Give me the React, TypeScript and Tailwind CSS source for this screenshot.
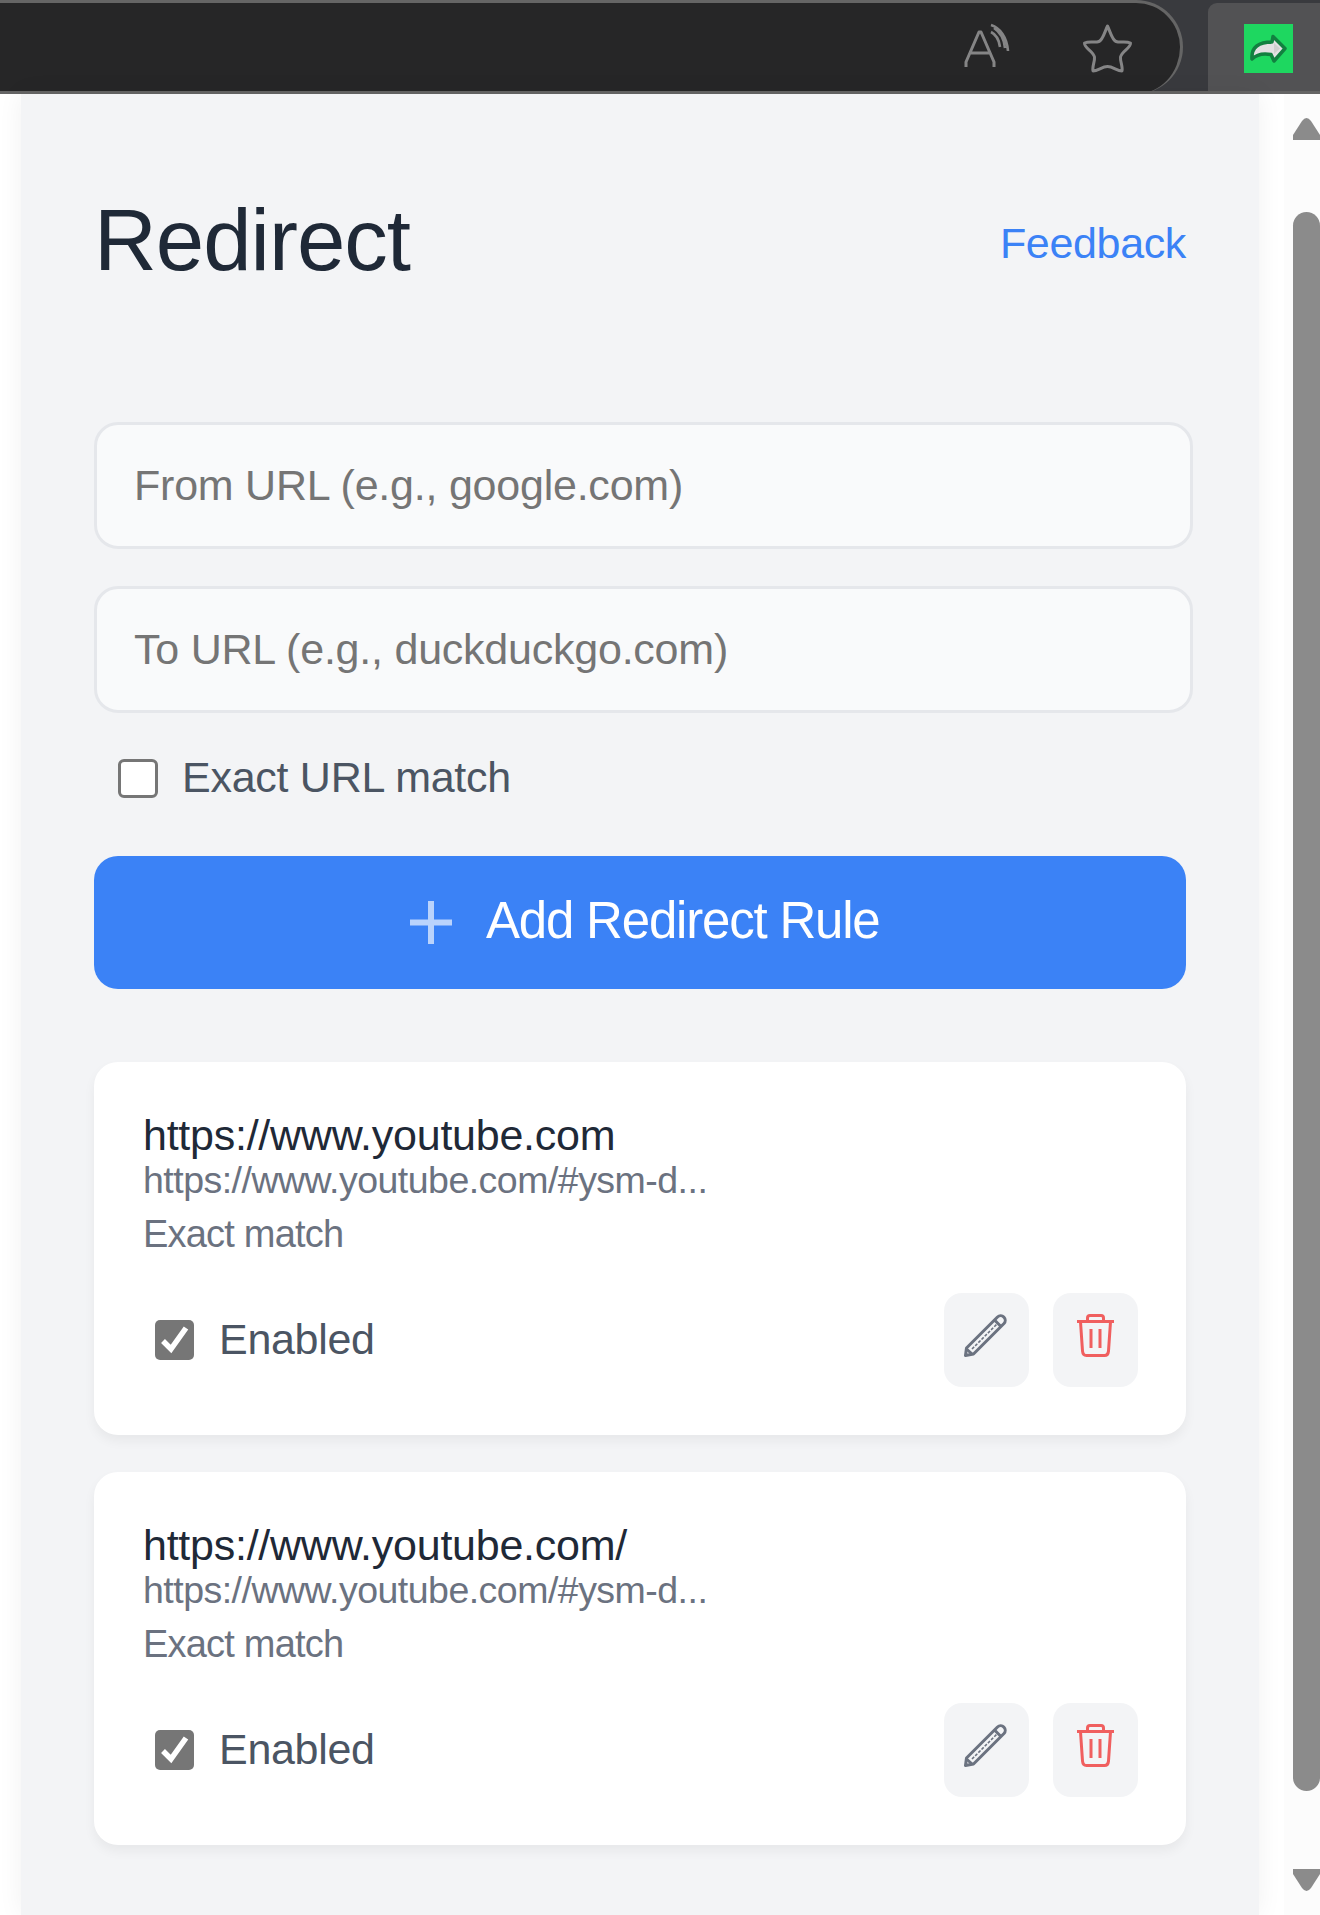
import React from "react";

const rules = [
  { from: "https://www.youtube.com", to: "https://www.youtube.com/#ysm-d..." },
  { from: "https://www.youtube.com/", to: "https://www.youtube.com/#ysm-d..." },
];

function ReadAloudIcon() {
  return (
    <svg className="h-[48px] w-[48px]" viewBox="0 0 48 48" fill="none" stroke="#858586" strokeWidth="3" strokeLinejoin="round">
      <path d="M2 47V42L15 12h2l13 30v5M7 33h18" />
      <path d="M27 12c4 2 8 7 9 15M27 5c9 3 16 12 17 26M30 8c6 4 10 10 11 20" strokeWidth="2.600" />
    </svg>
  );
}

function StarIcon() {
  return (
    <svg className="h-[51px] w-[51px]" viewBox="0 0 51 51" fill="none" stroke="#858586" strokeWidth="3" strokeLinejoin="round">
      <path d="M25.500 3C28 8 30 17 34 18.500C38 20 44 18 48.500 20C49 25 40 28 38.500 34C38 38 41 44 40 48C35 48 31 43.500 25.500 43.500C20 43.500 16 48 11 48C10 44 13 38 12.500 34C11 28 2 25 2.500 20C7 18 13 20 17 18.500C21 17 23 8 25.500 3Z" />
    </svg>
  );
}

function RedirectLogo() {
  return (
    <svg className="h-[49px] w-[49px] bg-[#1ed760]" viewBox="0 0 49 49">
      <path d="M8 35C7 23 15 18 28 18L29 12.500L41 24.500L30 37L27 30.500C19 29 13 30 8 35Z" fill="#e3e0e3" stroke="#128040" strokeWidth="3.500" strokeLinejoin="round" />
      <path d="M30 19 36 24.500 30 30Z" fill="#cfcfcf" />
    </svg>
  );
}

function PencilIcon() {
  return (
    <svg className="h-[45px] w-[45px]" viewBox="0 0 45 45" fill="none" stroke="#6b7280" strokeWidth="3" strokeLinejoin="round">
      <path d="M2.500 42.500 3.500 35 34.500 4a4.600 4.600 0 0 1 6.500 6.500L10.500 41Z" />
      <path d="M31 6.500l7 7M3.500 36l5.500 5" />
      <path d="M9 36 34 11" strokeWidth="1.600" strokeDasharray="3 1.500" />
    </svg>
  );
}

function TrashIcon() {
  return (
    <svg className="h-[45px] w-[39px]" viewBox="0 0 39 45" fill="none" stroke="#ef4444" strokeOpacity=".85" strokeWidth="3" strokeLinejoin="round">
      <path d="M1 8.500h37M11.500 8V5q0-2.500 2.500-2.500h11q2.500 0 2.500 2.500v3M4.500 9 6.500 38q.4 4.500 4 4.500h18q3.600 0 4-4.500L34.500 9" />
      <path d="M15 16v19M24 16v19" />
    </svg>
  );
}

function CheckedBox() {
  return (
    <span className="flex h-[40px] w-[39px] items-center justify-center rounded-[5px] bg-[#767676]">
      <svg className="h-[40px] w-[39px]" viewBox="0 0 39 40" fill="none" stroke="#fff" strokeWidth="5.500">
        <path d="m8 21 8 8L31 8" />
      </svg>
    </span>
  );
}

function RuleCard({ from, to }: { from: string; to: string }) {
  return (
    <article className="flex h-[373px] flex-col rounded-3xl bg-white pl-[49px] pr-12 pt-[48px] shadow-[0_6px_12px_rgba(0,0,0,0.05)]">
      <div className="h-[49px] whitespace-nowrap text-[43px] leading-[50px] tracking-[-0.25px] text-[#1f2937]">{from}</div>
      <div className="h-[42px] whitespace-nowrap text-[37.5px] leading-[42px] tracking-[-0.52px] text-[#6b7280]">{to}</div>
      <div className="mt-3 h-[42px] text-[38px] leading-[42px] tracking-[-0.8px] text-[#6b7280]">Exact match</div>
      <div className="mt-[38px] flex h-[94px] items-center">
        <div className="ml-3 flex items-center gap-[25px]">
          <CheckedBox />
          <span className="-mt-[3px] text-[43px] leading-[50px] tracking-[-0.3px] text-[#4b5563]">Enabled</span>
        </div>
        <div className="ml-auto flex gap-6">
          <button className="flex h-[94px] w-[85px] items-start justify-center rounded-[18px] bg-[#f3f4f6] pr-[2px] pt-[20px]"><PencilIcon /></button>
          <button className="flex h-[94px] w-[85px] items-start justify-center rounded-[18px] bg-[#f3f4f6] pt-[20px]"><TrashIcon /></button>
        </div>
      </div>
    </article>
  );
}

export default function App() {
  return (
    <div className="flex h-[1915px] w-[1320px] flex-col overflow-hidden bg-white font-['Liberation_Sans',Arial,sans-serif]">
      <header className="flex h-[94px] shrink-0 border-b-[3px] border-[#656565] bg-[#393a3e]">
        <div className="h-[91px] w-[1183px] overflow-hidden">
          <div className="flex h-[94px] w-[1183px] items-start rounded-r-[47px] border-r-[3px] border-t-[3px] border-[#656565] bg-[#262627]">
            <span className="ml-[964px] mt-[17px]"><ReadAloudIcon /></span>
            <span className="ml-[70px] mt-[20px]"><StarIcon /></span>
          </div>
        </div>
        <div className="ml-[25px] mt-[3px] flex flex-1 rounded-tl-[9px] bg-[#525254] pl-9 pt-[21px]"><RedirectLogo /></div>
      </header>
      <div className="flex min-h-0 flex-1">
        <main className="ml-[21px] w-[1238px] bg-[#f3f4f6] px-[73px] shadow-[0_0_24px_rgba(0,0,0,0.06)]">
          <div className="flex h-[328px] items-start justify-between">
            <h1 className="mt-[96px] text-[87px] leading-[100px] tracking-[-1px] text-[#1f2937]">Redirect</h1>
            <a className="mt-[124px] text-[43px] leading-[50px] tracking-[-0.35px] text-[#3b82f6]">Feedback</a>
          </div>
          <div className="flex w-[1099px] flex-col gap-[37px]">
            <input className="h-[127px] rounded-3xl border-[3px] border-[#e5e7eb] bg-[#f9fafb] pl-[37px] pr-9 text-[43px] tracking-[-0.23px] placeholder:text-[#757575]" placeholder="From URL (e.g., google.com)" />
            <input className="h-[127px] rounded-3xl border-[3px] border-[#e5e7eb] bg-[#f9fafb] pl-[37px] pr-9 text-[43px] tracking-[-0.23px] placeholder:text-[#757575]" placeholder="To URL (e.g., duckduckgo.com)" />
          </div>
          <label className="ml-6 mt-[40px] flex h-[50px] items-center gap-6">
            <span className="h-[39px] w-[40px] rounded-[6px] border-[3px] border-[#767676] bg-white" />
            <span className="-mt-[3px] text-[43px] leading-[50px] tracking-[-0.27px] text-[#4b5563]">Exact URL match</span>
          </label>
          <button className="mt-[53px] flex h-[133px] w-full items-center rounded-3xl bg-[#3b82f6] pl-[316px] text-white">
            <svg className="h-[43px] w-[42px]" viewBox="0 0 42 43" stroke="#fff" strokeOpacity=".65" strokeWidth="6"><path d="M0 21.500H42M21 0V43" /></svg>
            <span className="-mt-[3px] ml-[34px] text-[51px] leading-[60px] tracking-[-1.2px]">Add Redirect Rule</span>
          </button>
          <section className="mt-[73px] flex flex-col gap-[37px]">
            {rules.map((r) => <RuleCard key={r.from} {...r} />)}
          </section>
        </main>
        <div className="z-10 ml-auto flex w-9 flex-col items-end bg-[#fcfcfc]">
          <svg className="mt-6 h-[22px] w-[27px]" viewBox="0 0 27 22" fill="#8b8b8b"><path d="M0 22v-5L9 3q4.500-6 9 0l9 14v5z" /></svg>
          <div className="mt-[72px] h-[1579px] w-[27px] rounded-full bg-[#8b8b8b]" />
          <svg className="mt-[78px] h-[22px] w-[27px]" viewBox="0 0 27 22" fill="#8b8b8b"><path d="M0 0v5l9 14q4.500 6 9 0l9-14V0z" /></svg>
        </div>
      </div>
    </div>
  );
}
